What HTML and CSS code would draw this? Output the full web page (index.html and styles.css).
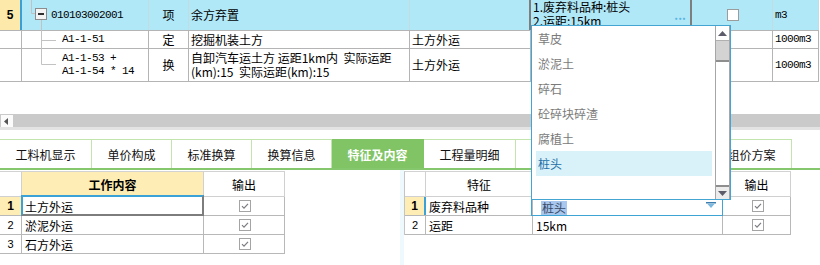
FILE: index.html
```html
<!DOCTYPE html>
<html lang="zh">
<head>
<meta charset="utf-8">
<title>特征及内容</title>
<link rel="stylesheet" href="styles.css">
</head>
<body>
<div class="app">
  <div class="grid">
    <div class="row r1">
      <div class="cell idx cur">5</div>
      <div class="cell code mono lvl0">010103002001</div>
      <div class="cell type">项</div>
      <div class="cell name">余方弃置</div>
      <div class="cell tag edge"></div>
      <div class="cell feat edge"><div class="feat-text">1.废弃料品种:桩头<br>2.运距:15km</div><span class="dots">...</span></div>
      <div class="cell chk"><span class="box"></span></div>
      <div class="cell unit mono">m3</div>
    </div>
    <div class="row r2">
      <div class="cell idx"></div>
      <div class="cell code mono lvl1">A1-1-51</div>
      <div class="cell type">定</div>
      <div class="cell name">挖掘机装土方</div>
      <div class="cell tag">土方外运</div>
      <div class="cell feat"></div>
      <div class="cell chk"></div>
      <div class="cell unit mono">1000m3</div>
    </div>
    <div class="row r3">
      <div class="cell idx"></div>
      <div class="cell code mono lvl1">A1-1-53 +<br>A1-1-54 * 14</div>
      <div class="cell type">换</div>
      <div class="cell name">自卸汽车运土方 运距1km内  实际运距<br>(km):15  实际运距(km):15</div>
      <div class="cell tag">土方外运</div>
      <div class="cell feat"></div>
      <div class="cell chk"></div>
      <div class="cell unit mono">1000m3</div>
    </div>
    <svg class="tree" width="40" height="82" viewBox="0 0 40 82">
      <g stroke="#c2c2c2" stroke-width="1" fill="none">
        <path d="M9.5 0V13.5H13"/>
        <path d="M19.5 20V64.5M19.5 40.5H34M19.5 64.5H34"/>
      </g>
      <rect x="13.5" y="8.5" width="11" height="11" fill="#f4f4f4" stroke="#8c8c8c"/>
      <rect x="16" y="13" width="6" height="2" fill="#303030"/>
    </svg>
  </div>

  <div class="hscroll">
    <div class="hs-btn"><svg width="4" height="7" viewBox="0 0 4 7"><path d="M4 0V7L0 3.5Z" fill="#555"/></svg></div>
  </div>
  <div class="hs-shadow"></div>

  <div class="tabbar">
    <div class="tab w5">工料机显示</div>
    <div class="tab w4">单价构成</div>
    <div class="tab w4">标准换算</div>
    <div class="tab w4">换算信息</div>
    <div class="tab w5 active">特征及内容</div>
    <div class="tab w5">工程量明细</div>
    <div class="tab wblank"></div>
    <div class="tab w4">组价方案</div>
  </div>

  <div class="panels">
    <div class="panel left">
      <div class="tbl ltbl">
        <div class="trow head">
          <div class="tc num"></div>
          <div class="tc hd-yellow">工作内容</div>
          <div class="tc center">输出</div>
        </div>
        <div class="trow">
          <div class="tc num cur">1</div>
          <div class="tc focus">土方外运</div>
          <div class="tc center"><svg class="ck" width="12" height="12" viewBox="0 0 12 12"><rect x="0.5" y="0.5" width="11" height="11" fill="#fff" stroke="#a4a4a4"/><path d="M3 6.2L5 8.2L9 3.8" fill="none" stroke="#7c7c84" stroke-width="1.2"/></svg></div>
        </div>
        <div class="trow">
          <div class="tc num">2</div>
          <div class="tc">淤泥外运</div>
          <div class="tc center"><svg class="ck" width="12" height="12" viewBox="0 0 12 12"><rect x="0.5" y="0.5" width="11" height="11" fill="#fff" stroke="#a4a4a4"/><path d="M3 6.2L5 8.2L9 3.8" fill="none" stroke="#7c7c84" stroke-width="1.2"/></svg></div>
        </div>
        <div class="trow">
          <div class="tc num">3</div>
          <div class="tc">石方外运</div>
          <div class="tc center"><svg class="ck" width="12" height="12" viewBox="0 0 12 12"><rect x="0.5" y="0.5" width="11" height="11" fill="#fff" stroke="#a4a4a4"/><path d="M3 6.2L5 8.2L9 3.8" fill="none" stroke="#7c7c84" stroke-width="1.2"/></svg></div>
        </div>
      </div>
    </div>
    <div class="splitter"></div>
    <div class="panel right">
      <div class="tbl rtbl">
        <div class="trow head">
          <div class="tc num"></div>
          <div class="tc center">特征</div>
          <div class="tc center"></div>
          <div class="tc center">输出</div>
        </div>
        <div class="trow">
          <div class="tc num cur mark">1</div>
          <div class="tc">废弃料品种</div>
          <div class="tc combo"><span class="seltext">桩头</span><svg class="combo-arrow" width="10" height="6" viewBox="0 0 10 6"><rect x="0" y="0" width="10" height="1.5" fill="#3d7eb0"/><path d="M1.5 2H8.5L5 6Z" fill="#7ab8e0"/></svg></div>
          <div class="tc center"><svg class="ck" width="12" height="12" viewBox="0 0 12 12"><rect x="0.5" y="0.5" width="11" height="11" fill="#fff" stroke="#a4a4a4"/><path d="M3 6.2L5 8.2L9 3.8" fill="none" stroke="#7c7c84" stroke-width="1.2"/></svg></div>
        </div>
        <div class="trow">
          <div class="tc num">2</div>
          <div class="tc">运距</div>
          <div class="tc">15km</div>
          <div class="tc center"><svg class="ck" width="12" height="12" viewBox="0 0 12 12"><rect x="0.5" y="0.5" width="11" height="11" fill="#fff" stroke="#a4a4a4"/><path d="M3 6.2L5 8.2L9 3.8" fill="none" stroke="#7c7c84" stroke-width="1.2"/></svg></div>
        </div>
      </div>
    </div>
  </div>

  <div class="dropdown">
    <ul class="dd-list">
      <li>草皮</li>
      <li>淤泥土</li>
      <li>碎石</li>
      <li>砼碎块碎渣</li>
      <li>腐植土</li>
      <li class="hl">桩头</li>
    </ul>
    <div class="vscroll">
      <div class="sb-btn up"><svg width="9" height="5" viewBox="0 0 9 5"><path d="M0 5H9L4.5 0Z" fill="#5c5c6a"/></svg></div>
      <div class="sb-thumb"></div>
      <div class="sb-track"></div>
      <div class="sb-btn down"><svg width="9" height="5" viewBox="0 0 9 5"><path d="M0 0H9L4.5 5Z" fill="#5c5c6a"/></svg></div>
    </div>
  </div>
</div>
</body>
</html>
```

FILE: styles.css
```css
* { box-sizing: border-box; }
body { margin: 0; background: #fff; }
.app {
  position: relative;
  width: 820px;
  height: 265px;
  overflow: hidden;
  font-family: "Noto Sans CJK SC", "Noto Sans", sans-serif;
  font-size: 12px;
  color: #000;
  display: flex;
  flex-direction: column;
}

/* top grid */
.grid { position: relative; width: 819px; flex: none; }
.row {
  display: grid;
  grid-template-columns: 22px 127px 40px 221px 121px 161px 81px 46px;
  border-bottom: 1px solid #b4b4b4;
}
.r1 { height: 31px; background: #b1e8f8; }
.r2 { height: 18px; }
.r3 { height: 33px; }
.cell {
  border-right: 1px solid #b4b4b4;
  padding: 0 2px;
  display: flex;
  align-items: center;
  line-height: 14px;
  white-space: pre;
  overflow: hidden;
}
.r1 .cell { border-right-color: #c3dbe3; }
.mono { font-family: "Liberation Mono", monospace; font-size: 11px; letter-spacing: -0.6px; line-height: 13px; }
.idx { justify-content: center; font-weight: bold; font-family: "Liberation Sans", sans-serif; }
.r1 .idx.cur { background: #fde9aa; border-right: 2px solid #3a9fd4; }
.lvl0 { padding-left: 29px; }
.lvl1 { padding-left: 40px; }
.type { justify-content: center; }
.r1 .cell.edge { border-right: 2px solid #7e7e7e; }
.feat { align-items: flex-start; padding-top: 0; }
.feat-text { flex: 1; }
.dots { color: #5ab5e2; font-weight: bold; letter-spacing: 0; align-self: center; margin-right: 2px; line-height: 6px; }
.chk { justify-content: center; }
.box { width: 12px; height: 12px; border: 1px solid #9c9c9c; background: #fff; margin-left: 1px; }
.unit { padding-left: 2px; }
.tree { position: absolute; left: 22px; top: 0; }

/* horizontal scrollbar */
.hscroll {
  margin-top: 32px;
  height: 13px;
  background: #cacaca;
  display: flex;
  flex: none;
}
.hs-btn {
  width: 12px;
  height: 12px;
  margin: 1px 0 0 1px;
  background: #fbfbfb;
  display: flex;
  align-items: center;
  padding-left: 3px;
}
.hs-shadow { height: 3px; background: #e3e3e3; flex: none; }

/* tabs */
.tabbar {
  margin-top: 9px;
  height: 31px;
  display: flex;
  border-bottom: 2px solid #85c76d;
  flex: none;
}
.tab {
  height: 29px;
  border-top: 1px solid #c2e4ad;
  border-right: 1px solid #c2e4ad;
  display: flex;
  align-items: center;
  justify-content: center;
  font-size: 12px;
  color: #111;
}
.w5 { width: 92px; }
.w4 { width: 80px; }
.wblank { width: 196px; }
.tab.active { background: #80c466; color: #fff; font-weight: bold; border-color: #80c466; }

/* bottom panels */
.panels { display: flex; height: 95px; flex: none; }
.panel { padding-top: 1px; }
.panel.left { width: 400px; }
.splitter { width: 4px; background: #eef9fd; }
.panel.right { flex: 1; }
.tbl { border-top: 1px solid #d2d2d2; }
.ltbl { width: 285px; }
.rtbl { width: 387px; border-left: 1px solid #c4c4c4; }
.trow { display: grid; height: 19px; border-bottom: 1px solid #b8b8b8; }
.trow.head { height: 25px; border-bottom-color: #d0d0d0; }
.ltbl .trow { grid-template-columns: 22px 182px 81px; }
.rtbl .trow { grid-template-columns: 21px 107px 190px 68px; }
.tc {
  border-right: 1px solid #b8b8b8;
  display: flex;
  align-items: center;
  padding-left: 3px;
  white-space: nowrap;
  position: relative;
}
.head .tc { border-right-color: #d0d0d0; }
.center { justify-content: center; padding-left: 0; }
.num { justify-content: center; padding-left: 0; font-family: "Liberation Sans", sans-serif; font-size: 11px; }
.num.cur { background: #feedb4; font-weight: bold; font-size: 12px; }
.num.mark { border-right: 2px solid #3aa2d6; }
.hd-yellow { background: #feedb5; font-weight: bold; justify-content: center; padding-left: 0; }
.focus::after {
  content: "";
  position: absolute;
  left: -1px;
  top: -2px;
  right: -1px;
  bottom: -1px;
  border-top: 2px solid #3aa2d6;
  border-left: 2px solid #3aa2d6;
  border-right: 2px solid #7d7d7d;
  border-bottom: 2px solid #7d7d7d;
}
.combo { padding-left: 8px; justify-content: space-between; padding-right: 6px; }
.combo::after {
  content: "";
  position: absolute;
  left: -2px;
  top: -1px;
  right: -1px;
  bottom: -1px;
  border: 1px solid #3fa4d4;
}
.seltext { background: #a7c7ee; color: #3a4a66; line-height: 14px; padding: 0 1px; margin-top: 3px; }
.combo-arrow { margin-top: -2px; }
.ck { display: block; margin-left: 2px; }

/* dropdown */
.dropdown {
  position: absolute;
  left: 531px;
  top: 25px;
  width: 200px;
  height: 175px;
  background: #fff;
  border: 1px solid #45a5d2;
  display: flex;
  z-index: 10;
}
.dd-list {
  list-style: none;
  margin: 0;
  padding: 0 3px 0 4px;
  flex: 1;
}
.dd-list li {
  height: 25px;
  line-height: 25px;
  padding-left: 2px;
  color: #7a7a7a;
  font-size: 12px;
}
.dd-list li.hl { background: #d9f1f9; color: #1f70a8; }
.vscroll {
  width: 15px;
  border-left: 1px solid #a6a6a6;
  border-right: 1px solid #a6a6a6;
  display: flex;
  flex-direction: column;
  padding-top: 1px;
}
.sb-btn { display: flex; align-items: center; justify-content: center; flex: none; }
.sb-btn.up { height: 14px; background: #fff; border-bottom: 1px solid #b0b0b0; }
.sb-thumb { height: 21px; background: #d3d3d3; border-bottom: 2px solid #8e8e8e; flex: none; }
.sb-track { flex: 1; background: #fff; }
.sb-btn.down { height: 14px; background: #ececec; border-top: 2px solid #8e8e8e; }
```
